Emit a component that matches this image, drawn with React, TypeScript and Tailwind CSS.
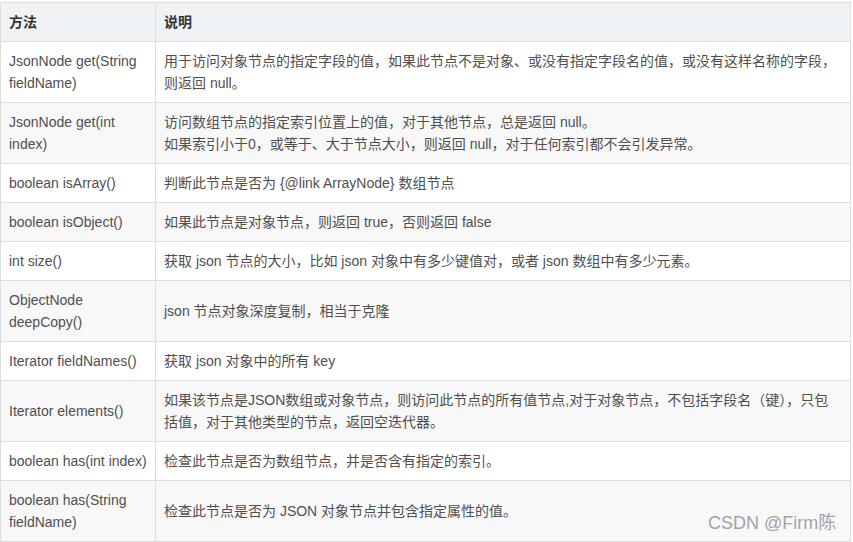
import React from "react";

const rows: { m: React.ReactNode; d: React.ReactNode }[] = [
  { m: <>JsonNode get(String<br />fieldName)</>, d: <>用于访问对象节点的指定字段的值，如果此节点不是对象、或没有指定字段名的值，或没有这样名称的字段，<br />则返回 null。</> },
  { m: <>JsonNode get(int<br />index)</>, d: <>访问数组节点的指定索引位置上的值，对于其他节点，总是返回 null。<br />如果索引小于0，或等于、大于节点大小，则返回 null，对于任何索引都不会引发异常。</> },
  { m: <>boolean isArray()</>, d: <>判断此节点是否为 {"{@link ArrayNode}"} 数组节点</> },
  { m: <>boolean isObject()</>, d: <>如果此节点是对象节点，则返回 true，否则返回 false</> },
  { m: <>int size()</>, d: <>获取 json 节点的大小，比如 json 对象中有多少键值对，或者 json 数组中有多少元素。</> },
  { m: <>ObjectNode<br />deepCopy()</>, d: <>json 节点对象深度复制，相当于克隆</> },
  { m: <>Iterator fieldNames()</>, d: <>获取 json 对象中的所有 key</> },
  { m: <>Iterator elements()</>, d: <>如果该节点是JSON数组或对象节点，则访问此节点的所有值节点,对于对象节点，不包括字段名（键），只包<br />括值，对于其他类型的节点，返回空迭代器。</> },
  { m: <>boolean has(int index)</>, d: <>检查此节点是否为数组节点，并是否含有指定的索引。</> },
  { m: <>boolean has(String<br />fieldName)</>, d: <>检查此节点是否为 JSON 对象节点并包含指定属性的值。</> },
];

export default function App() {
  return (
    <div
      className="relative w-[853px] h-[542px] bg-white pt-[2px] overflow-hidden"
      style={{ fontFamily: '"Liberation Sans", Arial, "Noto Sans CJK SC", sans-serif' }}
    >
      <table className="w-[851px] border-collapse text-[14px] leading-[22px] text-[#4f4f4f] table-fixed">
        <colgroup>
          <col className="w-[155px]" />
          <col />
        </colgroup>
        <thead>
          <tr className="bg-[#eff3f5]">
            <th className="border border-[#dddddd] px-2 py-2 text-left font-bold text-[#333333]">方法</th>
            <th className="border border-[#dddddd] px-2 py-2 text-left font-bold text-[#333333]">说明</th>
          </tr>
        </thead>
        <tbody>
          {rows.map((r, i) => (
            <tr key={i} className={i % 2 === 0 ? "bg-white" : "bg-[#f8f8f8]"}>
              <td className="border border-[#dddddd] px-2 py-2 align-middle whitespace-nowrap">{r.m}</td>
              <td className="border border-[#dddddd] px-2 py-2 align-middle whitespace-nowrap">{r.d}</td>
            </tr>
          ))}
        </tbody>
      </table>
      <div className="absolute left-[708px] top-[510px] text-[18px] leading-[26px] text-[#a3a3a3]">
        CSDN @Firm陈
      </div>
    </div>
  );
}
